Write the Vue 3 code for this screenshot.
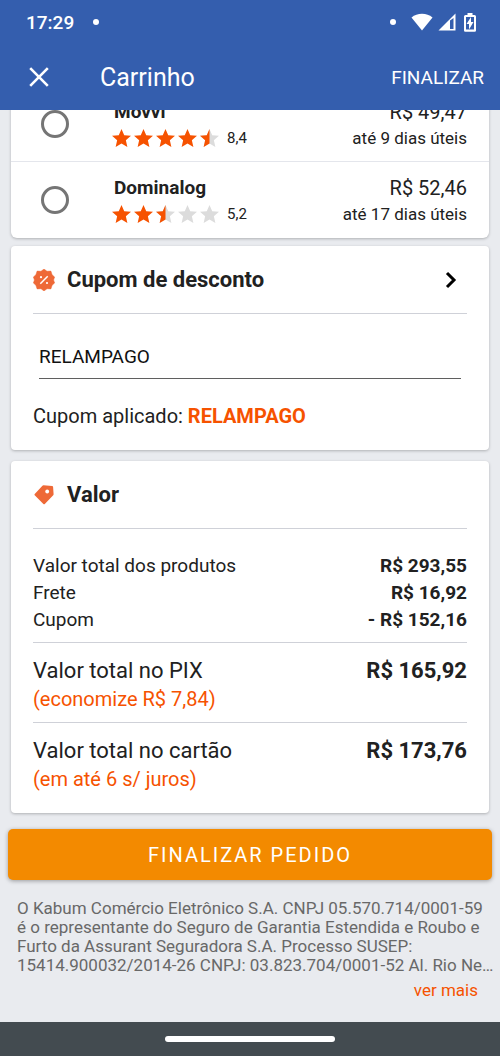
<script setup>
import { ref } from 'vue'

const starPath = 'M12 2l2.9 6.6 7.1.6-5.4 4.7 1.6 7L12 17.2l-6.2 3.7 1.6-7L2 9.2l7.1-.6z'
const halfStarPath = 'M12 2v15.2l-6.2 3.7 1.6-7L2 9.2l7.1-.6z'

const carriers = [
  { id: 'movvi', name: 'Movvi', score: '8,4', stars: 4.5, price: 'R$ 49,47', term: 'até 9 dias úteis' },
  { id: 'dominalog', name: 'Dominalog', score: '5,2', stars: 2.5, price: 'R$ 52,46', term: 'até 17 dias úteis' },
]
const carrier = ref('')
const coupon = ref('RELAMPAGO')

const items = [
  { label: 'Valor total dos produtos', value: 'R$ 293,55' },
  { label: 'Frete', value: 'R$ 16,92' },
  { label: 'Cupom', value: '- R$ 152,16' },
]
const totals = [
  { label: 'Valor total no PIX', value: 'R$ 165,92', note: '(economize R$ 7,84)' },
  { label: 'Valor total no cartão', value: 'R$ 173,76', note: '(em até 6 s/ juros)' },
]
</script>

<template>
  <div class="screen">
    <header class="top">
      <div class="status">
        <span class="clock">17:29</span>
        <span class="dot"></span>
        <span class="spacer"></span>
        <span class="dot"></span>
        <svg class="wifi" viewBox="0 0 22 18" width="22" height="18"><path d="M11 17.500L.5 4.500C3.500 2 7 .8 11 .8s7.500 1.200 10.500 3.700z" fill="#fff" /></svg>
        <svg class="signal" viewBox="0 0 18 18" width="18" height="18">
          <path d="M17.500.5v17H.5z" fill="#fff" />
          <path d="M12 7.500l3.500-2.500v11H12z" fill="#345eae" />
        </svg>
        <svg class="battery" viewBox="0 0 12 19" width="12" height="19">
          <path d="M3.500 0h5v2h2A1.500 1.500 0 0 1 12 3.500v14a1.300 1.300 0 0 1-1.300 1.300H1.300A1.300 1.300 0 0 1 0 17.500v-14A1.500 1.500 0 0 1 1.500 2h2z" fill="#fff" />
          <path d="M2 4h8v12.500H2z" fill="#345eae" />
          <path d="M7 4L2.500 11H5v5.500L9.500 9H7z" fill="#fff" />
        </svg>
      </div>
      <div class="bar">
        <button class="icon-btn" type="button" aria-label="Fechar">
          <svg viewBox="0 0 20 20" width="20" height="20"><path d="M1.200 1.200l17.600 17.600M18.800 1.200L1.200 18.800" stroke="#fff" stroke-width="2.600" /></svg>
        </button>
        <h1>Carrinho</h1>
        <button class="finish-link" type="button">FINALIZAR</button>
      </div>
    </header>

    <main>
      <section class="card carriers">
        <label v-for="c in carriers" :key="c.id" class="carrier">
          <input v-model="carrier" type="radio" name="carrier" :value="c.id" />
          <span class="who">
            <strong>{{ c.name }}</strong>
            <span class="rating">
              <svg v-for="n in 5" :key="n" viewBox="2 2 20 19" width="19" height="18">
                <path :d="starPath" :fill="n <= c.stars ? '#f65200' : '#dcdcdc'" />
                <path v-if="n - c.stars === 0.5" :d="halfStarPath" fill="#f65200" />
              </svg>
              <span class="score">{{ c.score }}</span>
            </span>
          </span>
          <span class="cost">
            <span class="price">{{ c.price }}</span>
            <span class="term">{{ c.term }}</span>
          </span>
        </label>
      </section>

      <section class="card coupon">
        <div class="head">
          <svg viewBox="0 0 22 22" width="22" height="22">
            <path d="M11 0l3 2.300 3.900-.2 1.200 3.700L21.600 8l-1 3 1 3-2.500 2.200-1.200 3.700-3.900-.2L11 22l-3-2.300-3.900.2-1.200-3.700L.4 14l1-3-1-3 2.500-2.200 1.200-3.700 3.900.2z" fill="#ee6937" stroke="#ee6937" stroke-width=".5" stroke-linejoin="round" />
            <path d="M7.300 14.700l7.400-7.400" stroke="#fff" stroke-width="1.500" />
            <circle cx="8" cy="8.200" r="1.100" fill="#fff" />
            <circle cx="14" cy="14" r="1.100" fill="#fff" />
          </svg>
          <h2>Cupom de desconto</h2>
          <button class="icon-btn" type="button" aria-label="Abrir cupom">
            <svg viewBox="0 0 12 18" width="12" height="18"><path d="M2 2l7 7-7 7" fill="none" stroke="#000" stroke-width="3" /></svg>
          </button>
        </div>
        <input v-model="coupon" class="field" type="text" aria-label="Código do cupom" />
        <p class="applied">Cupom aplicado: <strong>RELAMPAGO</strong></p>
      </section>

      <section class="card values">
        <div class="head">
          <svg viewBox="0 0 22 22" width="22" height="22">
            <path d="M10.500 1.300l8.600.6q.9.100 1 1l.5 7.300q0 .6-.4 1.100l-8.400 8.700q-.7.700-1.400 0L1.700 11.200q-.6-.7 0-1.300l7.500-8q.6-.6 1.300-.6z" fill="#ee6937" />
            <circle cx="14.200" cy="7.500" r="1.900" fill="#fff" />
          </svg>
          <h2>Valor</h2>
        </div>
        <dl class="items">
          <div v-for="i in items" :key="i.label" class="line">
            <dt>{{ i.label }}</dt>
            <dd>{{ i.value }}</dd>
          </div>
        </dl>
        <dl v-for="t in totals" :key="t.label" class="total">
          <div class="line">
            <dt>{{ t.label }}</dt>
            <dd>{{ t.value }}</dd>
          </div>
          <dd class="note">{{ t.note }}</dd>
        </dl>
      </section>

      <button class="order" type="button">FINALIZAR PEDIDO</button>

      <footer class="legal">
        <p>O Kabum Comércio Eletrônico S.A. CNPJ 05.570.714/0001-59 é&nbsp;o representante do Seguro de Garantia Estendida e Roubo e Furto da Assurant Seguradora S.A. Processo SUSEP: 15414.900032/2014-26 CNPJ: 03.823.704/0001-52 Al. Rio Ne…</p>
        <a href="#">ver mais</a>
      </footer>
    </main>

    <nav class="system" aria-label="Sistema"><span></span></nav>
  </div>
</template>

<style>
body {
  margin: 0;
  background: #e9ebef;
}
</style>

<style scoped>
.screen {
  display: flex;
  flex-direction: column;
  min-height: 100vh;
  background: #e9ebef;
  color: #212121;
  font-family: Roboto, "Liberation Sans", sans-serif;
  font-size: 20px;
}
h1, h2, p, dl, dd { margin: 0; }
button {
  padding: 0;
  border: 0;
  background: none;
  font-family: inherit;
  cursor: pointer;
}
svg { display: block; flex: none; }

.top {
  position: relative;
  z-index: 1;
  background: #345eae;
  color: #fff;
}
.status {
  display: flex;
  align-items: center;
  height: 44px;
  padding: 0 24px 0 26px;
}
.clock {
  margin-right: 19px;
  font-size: 19px;
  font-weight: 500;
}
.dot {
  width: 6px;
  height: 6px;
  border-radius: 50%;
  background: #fff;
}
.spacer { flex: 1; }
.wifi { margin-left: 15px; }
.signal { margin-left: 5px; }
.battery { margin-left: 8px; }
.bar {
  display: flex;
  align-items: center;
  height: 66px;
  padding: 0 16px 0 29px;
}
h1 {
  flex: 1;
  margin-left: 51px;
  font-size: 25px;
  font-weight: 400;
}
.finish-link {
  color: #fff;
  font-size: 19px;
}

main { flex: 1; }
.card {
  margin: 0 11px;
  padding: 0 22px;
  border-radius: 4px;
  background: #fff;
  box-shadow: 0 1px 3px rgba(0, 0, 0, .25);
}
/* The list is scrolled partly beneath the app bar. */
.carriers {
  margin-top: -24px;
  padding: 0;
  border-radius: 0 0 6px 6px;
}
.carrier {
  display: flex;
  align-items: center;
  box-sizing: border-box;
  height: 76px;
  padding: 0 22px 0 30px;
  border-bottom: 1px solid #e4e6ec;
}
.carrier:last-child { border-bottom-color: transparent; }
.carrier input {
  appearance: none;
  box-sizing: border-box;
  width: 28px;
  height: 28px;
  margin: 0 43px 0 0;
  border: 3px solid #757575;
  border-radius: 50%;
}
.carrier input:checked { background: radial-gradient(#f65200 50%, transparent 55%); }
.who, .cost {
  display: flex;
  flex-direction: column;
}
.who { flex: 1; }
.who strong {
  font-size: 19px;
  line-height: 28px;
  margin-left: 2px;
}
.rating {
  display: flex;
  align-items: center;
  gap: 3px;
  height: 24px;
}
.score {
  margin-left: 5px;
  font-size: 15px;
}
.cost { text-align: right; }
.price { line-height: 28px; }
.term {
  font-size: 17px;
  line-height: 24px;
}

.coupon { margin-top: 8px; padding-bottom: 19px; }
.values { margin-top: 11px; padding-bottom: 11px; }
.head {
  display: flex;
  align-items: center;
  height: 67px;
  padding-right: 10px;
  border-bottom: 1px solid #cfd1d8;
}
h2 {
  flex: 1;
  margin-left: 12px;
  font-size: 22px;
  font-weight: 700;
}
.field {
  display: block;
  box-sizing: border-box;
  width: calc(100% - 12px);
  height: 45px;
  margin: 20px 6px 0;
  padding: 0;
  border: 0;
  border-bottom: 1px solid #5f5f5f;
  outline: 0;
  background: transparent;
  color: #111;
  font-family: inherit;
  font-size: 19px;
}
.applied {
  margin-top: 22px;
  line-height: 30px;
}
.applied strong { color: #f65200; }

.items {
  padding: 23px 0 9px;
  font-size: 19px;
}
.line {
  display: flex;
  justify-content: space-between;
}
.items .line { line-height: 27px; }
.line dd { font-weight: 700; }
.total {
  padding: 13px 0 9px;
  border-top: 1px solid #cfd1d8;
}
.total .line {
  font-size: 22px;
  line-height: 29px;
}
.total .note {
  color: #f65200;
  font-size: 20px;
  line-height: 28px;
}

.order {
  display: block;
  width: calc(100% - 16px);
  height: 51px;
  margin: 16px 8px 0;
  border-radius: 5px;
  background: #f38a00;
  box-shadow: 0 1px 4px rgba(0, 0, 0, .35);
  color: #fff;
  font-size: 20px;
  letter-spacing: 2px;
}
.legal {
  padding: 19px 4px 18px 17px;
  color: #686868;
  font-size: 17px;
}
.legal p { line-height: 19px; }
.legal a {
  display: block;
  width: fit-content;
  margin: 1px 18px 0 auto;
  color: #f65200;
  line-height: 28px;
  text-decoration: none;
}
.system {
  display: flex;
  align-items: center;
  justify-content: center;
  height: 34px;
  background: #434b50;
}
.system span {
  width: 34%;
  height: 6px;
  border-radius: 3px;
  background: #fff;
}
</style>
